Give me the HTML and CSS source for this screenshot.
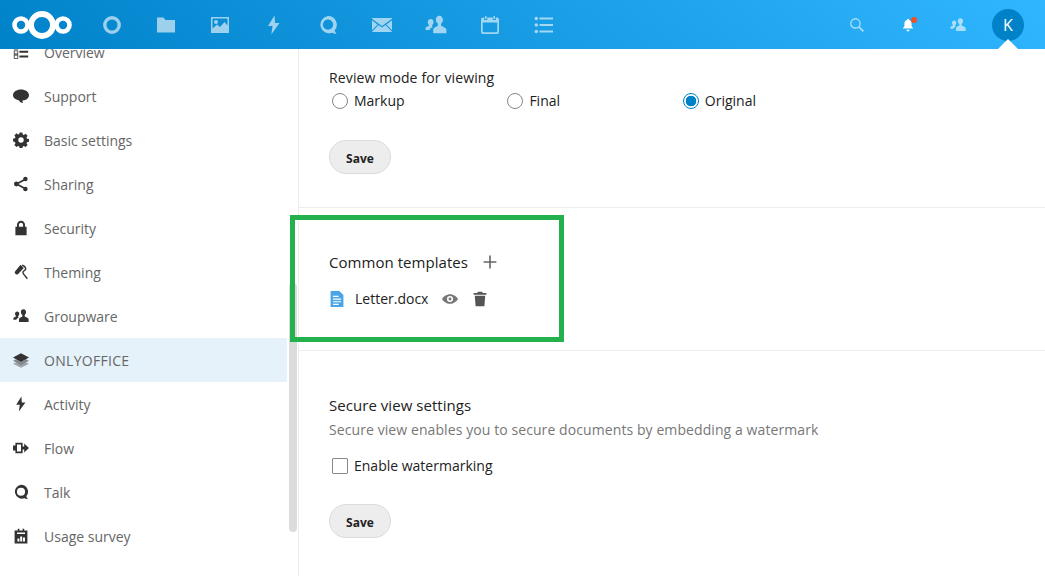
FILE: index.html
```html
<!DOCTYPE html>
<html lang="en">
<head>
<meta charset="utf-8">
<title>ONLYOFFICE settings</title>
<link rel="stylesheet" href="styles.css">
</head>
<body>
<svg class="defs" aria-hidden="true">
  <symbol id="i-ring" viewBox="0 0 20 20"><circle cx="10" cy="10" r="7.2" fill="none" stroke="currentColor" stroke-width="3.4"/></symbol>
  <symbol id="i-folder" viewBox="0 0 20 20"><path fill="currentColor" d="M1 2.500h6.500l2 2.500H19v12.500H1z"/></symbol>
  <symbol id="i-image" viewBox="0 0 20 20"><path fill="currentColor" fill-rule="evenodd" d="M1 2h18v16H1zM2.500 3.500v10l4.500-4 3 2.500 4.500-5 3 3.500V3.500zM6 5a2 2 0 1 1 0 4 2 2 0 0 1 0-4z"/></symbol>
  <symbol id="i-flash" viewBox="0 0 20 20"><path fill="currentColor" d="M10.500 0.500 4 11h4.500l-1.200 8.500L15.500 8H11z"/></symbol>
  <symbol id="i-talk" viewBox="0 0 20 20"><path fill="currentColor" fill-rule="evenodd" d="M10 1a8.700 8.700 0 0 1 6.600 14.400l1.900 3.800-4.400-1.400A8.700 8.700 0 1 1 10 1zm0 3.600a5.100 5.100 0 1 0 0 10.200 5.100 5.100 0 0 0 0-10.200z"/></symbol>
  <symbol id="i-mail" viewBox="0 0 20 20"><path fill="currentColor" d="M0 3h20v.8L10 11 0 3.800zM0 5.200l5.600 4.200L0 15.200zM20 5.200v10l-5.600-5.800zM6.500 10.100 10 12.600l3.500-2.500L20 16.800v.2H0v-.2z"/></symbol>
  <symbol id="i-group" viewBox="0 0 20 20"><path fill="currentColor" d="M13 1.500c2 0 3.300 1.600 3.300 3.600 0 1.600-.8 3-1.700 3.800v1.500c0 .7 4.400 1.500 4.900 3.600v3.500H7.500V14c.4-2 4.200-2.900 4.200-3.600V8.900C10.700 8 9.800 6.700 9.800 5.100 9.800 3.100 11 1.500 13 1.500zM5.300 4.500c1.500 0 2.500 1.200 2.500 2.700 0 1.200-.6 2.300-1.300 2.900v1.100c0 .3.400.5.800.7-1.600.7-2.900 1.500-3.100 2.700H.5v-1.900c.3-1.300 3.200-1.700 3.200-2.500v-.1C2.900 9.500 2.500 8.400 2.500 7.200c0-1.500 1.300-2.700 2.800-2.700z"/></symbol>
  <symbol id="i-calendar" viewBox="0 0 20 20"><path fill="currentColor" fill-rule="evenodd" d="M5 1h1.500v3H5zM13.500 1H15v3h-1.500zM3 2.500h1.200V5h3V2.500h5.600V5h3V2.500H17a2 2 0 0 1 2 2V17a2 2 0 0 1-2 2H3a2 2 0 0 1-2-2V4.500a2 2 0 0 1 2-2zM2.700 7.500V16.500c0 .5.400.8.800.8h13c.5 0 .8-.3.800-.8V7.500z"/></symbol>
  <symbol id="i-tasks" viewBox="0 0 20 20"><path fill="currentColor" d="M5.500 2.500H19v2H5.500zM5.500 9H19v2H5.500zM5.500 15.500H19v2H5.500z"/><circle fill="currentColor" cx="2.300" cy="3.500" r="1.800"/><circle fill="currentColor" cx="2.300" cy="10" r="1.800"/><circle fill="currentColor" cx="2.300" cy="16.500" r="1.800"/></symbol>
  <symbol id="i-search" viewBox="0 0 20 20"><circle cx="8" cy="8" r="5.800" fill="none" stroke="currentColor" stroke-width="1.700"/><path d="M12.300 12.300 18 18" stroke="currentColor" stroke-width="2.200" fill="none"/></symbol>
  <symbol id="i-bell" viewBox="0 0 20 20"><path fill="currentColor" d="M10 2.500c.8 0 1.300.5 1.300 1.200 2.300.6 3.200 2.500 3.200 5v2.800l1.700 2.300v.7H3.800v-.7l1.700-2.300V8.700c0-2.500.9-4.400 3.200-5 0-.7.500-1.200 1.300-1.200zM8 16h4a2 2 0 0 1-4 0z"/></symbol>
  <symbol id="i-list" viewBox="0 0 20 20"><path fill="currentColor" fill-rule="evenodd" d="M1 1.800h5.500v5H1zM8 3h11v2.500H8zM8 8.500h11V11H8zM1 8h5.500v5H1zM2 9v3h3.500V9zM1 13.500h5.500v5H1zM2 14.500v3h3.500v-3zM8 14.500h11V17H8z"/></symbol>
  <symbol id="i-bubble" viewBox="0 0 20 20"><path fill="currentColor" d="M10 2c5.500 0 10 2.900 10 7 0 3.600-3.500 6.300-8 6.600-.4 0-.1 2.600 1 3.200-2.800 0-5-1.500-5.700-3.500C3 14.500 0 12.200 0 9c0-4.100 4.500-7 10-7z"/></symbol>
  <symbol id="i-gear" viewBox="0 0 20 20"><path fill="currentColor" fill-rule="evenodd" d="M8.300 0.500h3.400l.5 2.500 1.400.6 2.100-1.400 2.600 2.600-1.400 2.100.6 1.400 2.500.5v3.400l-2.500.5-.6 1.400 1.400 2.100-2.600 2.600-2.100-1.400-1.400.6-.5 2.500H8.300l-.5-2.500-1.400-.6-2.100 1.400-2.600-2.600 1.400-2.100-.6-1.400L0 11.700V8.300l2.500-.5.6-1.400-1.400-2.100 2.600-2.600 2.100 1.400 1.400-.6zM10 6.600a3.400 3.400 0 1 0 0 6.800 3.400 3.400 0 0 0 0-6.800z"/></symbol>
  <symbol id="i-share" viewBox="0 0 20 20"><path d="M15.500 4 4.500 10l11 6" fill="none" stroke="currentColor" stroke-width="2.200"/><circle fill="currentColor" cx="15.500" cy="3.800" r="2.800"/><circle fill="currentColor" cx="4.200" cy="10" r="3"/><circle fill="currentColor" cx="15.500" cy="16.200" r="2.800"/></symbol>
  <symbol id="i-lock" viewBox="0 0 20 20"><path fill="currentColor" fill-rule="evenodd" d="M10 1c3 0 5 2.200 5 5v2.500h2V19H3V8.500h2V6c0-2.800 2-5 5-5zm0 2.300C8.400 3.300 7.400 4.500 7.400 6v2.500h5.200V6c0-1.500-1-2.700-2.600-2.700z"/></symbol>
  <symbol id="i-roller" viewBox="0 0 20 20"><path fill="currentColor" d="M9.500 1 13.500 5 6.500 12.500c-1 1-2.500.8-3.500-.2-1-1-1-2.500 0-3.500z"/><path d="M11.500 1.500c2.800 1 4.500 2.800 4.300 4.800-.2 1.600-2.800 2.400-3.300 3.700-.3.800.2 1.800 1 3l4.500 5.500" fill="none" stroke="currentColor" stroke-width="1.800"/></symbol>
  <symbol id="i-layers" viewBox="0 0 20 20"><path fill="currentColor" opacity=".55" d="m10 12.500-6.200-3.300L0 10.900 10 16.500l10-5.600-3.800-1.700z"/><path fill="currentColor" opacity=".4" d="m10 16.300-6.200-3.300L0 14.700l10 5 10-5-3.800-1.700z"/><path fill="currentColor" d="M10 1.500 0 7l10 5.400L20 7z"/></symbol>
  <symbol id="i-flow" viewBox="0 0 20 20"><path fill="currentColor" fill-rule="evenodd" d="M3 3.500h9V8h2V4.500l6 5.500-6 5.500V12h-2v4.500H3V13H0V7h3zm2 2v9h5v-9z"/></symbol>
  <symbol id="i-survey" viewBox="0 0 20 20"><path fill="currentColor" fill-rule="evenodd" d="M2 3h4V1h2v2h4V1h2v2h4v16.500H2zM5 5.500v2h10v-2zM5.500 13v4h2.500v-4zM9 10.500V17h2.500v-6.500zM12.500 12v5H15v-5z"/></symbol>
  <symbol id="i-doc" viewBox="0 0 20 20"><path fill="currentColor" fill-rule="evenodd" d="M2 0h11l5 5v15H2zM5 6v1.500h7V6zM5 9.500V11h10V9.500zM5 12.700v1.500h10v-1.500zM5 15.900v1.500h7v-1.500z"/></symbol>
  <symbol id="i-eye" viewBox="0 0 20 20"><path fill="currentColor" fill-rule="evenodd" d="M10 4c4.500 0 8.500 3 10 6-1.500 3-5.500 6-10 6S1.500 13 0 10c1.500-3 5.500-6 10-6zm0 2.200a3.800 3.800 0 1 0 0 7.600 3.800 3.800 0 0 0 0-7.600zM10 8.200a1.800 1.800 0 1 1 0 3.600 1.800 1.800 0 0 1 0-3.600z"/></symbol>
  <symbol id="i-trash" viewBox="0 0 20 20"><path fill="currentColor" d="M7.500 1h5l1 1.500H18v2.300H2V2.500h4.500zM3.500 6h13l-1 13h-11z"/></symbol>
  <symbol id="i-plus" viewBox="0 0 20 20"><path fill="currentColor" d="M9 2h2v7h7v2h-7v7H9v-7H2V9h7z"/></symbol>
</svg>

<header class="topbar">
  <a class="logo" href="#" aria-label="Nextcloud">
    <svg width="60" height="30" viewBox="0 0 60 30"><g fill="none" stroke="#fff"><circle cx="9" cy="15" r="6.500" stroke-width="4.600"/><circle cx="30" cy="15" r="11" stroke-width="5.800"/><circle cx="51" cy="15" r="6.500" stroke-width="4.600"/></g></svg>
  </a>
  <nav class="apps">
    <a class="app" href="#"><svg class="ic20"><use href="#i-ring"/></svg></a>
    <a class="app" href="#"><svg class="ic20"><use href="#i-folder"/></svg></a>
    <a class="app" href="#"><svg class="ic20"><use href="#i-image"/></svg></a>
    <a class="app" href="#"><svg class="ic20"><use href="#i-flash"/></svg></a>
    <a class="app" href="#"><svg class="ic20"><use href="#i-talk"/></svg></a>
    <a class="app" href="#"><svg class="ic20"><use href="#i-mail"/></svg></a>
    <a class="app" href="#"><svg class="ic20 wide"><use href="#i-group"/></svg></a>
    <a class="app" href="#"><svg class="ic20"><use href="#i-calendar"/></svg></a>
    <a class="app" href="#"><svg class="ic20"><use href="#i-tasks"/></svg></a>
  </nav>
  <div class="tools">
    <a class="tool" href="#"><svg class="ic16"><use href="#i-search"/></svg></a>
    <a class="tool tool-bell" href="#"><svg class="ic16"><use href="#i-bell"/></svg><span class="dot"></span></a>
    <a class="tool tool-user" href="#"><svg class="ic16"><use href="#i-group"/></svg></a>
    <a class="avatar-cell" href="#"><span class="avatar">K</span><span class="caret"></span></a>
  </div>
</header>

<div class="layout">
  <aside class="sidebar">
    <ul class="menu">
      <li class="item"><svg class="ic16"><use href="#i-list"/></svg><span>Overview</span></li>
      <li class="item"><svg class="ic16"><use href="#i-bubble"/></svg><span>Support</span></li>
      <li class="item"><svg class="ic16"><use href="#i-gear"/></svg><span>Basic settings</span></li>
      <li class="item"><svg class="ic16"><use href="#i-share"/></svg><span>Sharing</span></li>
      <li class="item"><svg class="ic16"><use href="#i-lock"/></svg><span>Security</span></li>
      <li class="item"><svg class="ic16"><use href="#i-roller"/></svg><span>Theming</span></li>
      <li class="item"><svg class="ic16"><use href="#i-group"/></svg><span>Groupware</span></li>
      <li class="item active"><svg class="ic16"><use href="#i-layers"/></svg><span>ONLYOFFICE</span></li>
      <li class="item"><svg class="ic16"><use href="#i-flash"/></svg><span>Activity</span></li>
      <li class="item"><svg class="ic16"><use href="#i-flow"/></svg><span>Flow</span></li>
      <li class="item"><svg class="ic16"><use href="#i-talk"/></svg><span>Talk</span></li>
      <li class="item"><svg class="ic16"><use href="#i-survey"/></svg><span>Usage survey</span></li>
    </ul>
    <div class="scrollbar"></div>
  </aside>

  <main class="content">
    <section class="section first">
      <p class="line review">Review mode for viewing</p>
      <div class="radios">
        <label class="choice"><input type="radio" name="mode"><span>Markup</span></label>
        <label class="choice"><input type="radio" name="mode"><span>Final</span></label>
        <label class="choice"><input type="radio" name="mode" checked><span>Original</span></label>
      </div>
      <button class="save" type="button">Save</button>
    </section>

    <section class="section second">
      <div class="title-row">
        <h2 class="line heading">Common templates</h2>
        <svg class="plus"><use href="#i-plus"/></svg>
      </div>
      <div class="file-row">
        <svg class="doc"><use href="#i-doc"/></svg>
        <span class="file-name">Letter.docx</span>
        <svg class="eye"><use href="#i-eye"/></svg>
        <svg class="trash"><use href="#i-trash"/></svg>
      </div>
      <div class="callout"></div>
    </section>

    <section class="section third">
      <h2 class="line heading">Secure view settings</h2>
      <p class="line muted">Secure view enables you to secure documents by embedding a watermark</p>
      <label class="choice check"><input type="checkbox"><span>Enable watermarking</span></label>
      <button class="save save-last" type="button">Save</button>
    </section>
  </main>
</div>
</body>
</html>
```

FILE: styles.css
```css
* { box-sizing: border-box; }
html, body { height: 100%; }
body {
  margin: 0;
  overflow: hidden;
  background: #fff;
  color: #222;
  font: 14px/24px "Open Sans", sans-serif;
}
a { color: inherit; text-decoration: none; }
ul { list-style: none; margin: 0; padding: 0; }
h2, p { margin: 0; font: inherit; }
.defs { display: none; }
.ic20 { width: 20px; height: 20px; display: block; }
.ic16 { width: 16px; height: 16px; display: block; flex: none; }
.wide { width: 22px; height: 22px; }

.topbar {
  height: 49px;
  display: flex;
  align-items: center;
  color: #fff;
  background: linear-gradient(40deg, #0082c9 0%, #30b6ff 100%);
  position: relative;
  z-index: 2;
}
.logo { width: 85px; padding: 10px 0 0 12px; display: block; height: 49px; }
.logo svg { display: block; }
.apps { display: flex; }
.app { width: 54px; height: 49px; display: flex; align-items: center; justify-content: center; opacity: .6; }
.tools { margin-left: auto; display: flex; align-items: center; padding-right: 12px; }
.tool { width: 51px; height: 49px; display: flex; align-items: center; justify-content: center; opacity: .6; position: relative; }
.tool-bell { opacity: 1; left: 1px; }
.tool:first-child { left: 1px; }
.dot { position: absolute; top: 17px; left: 29px; width: 6px; height: 6px; border-radius: 50%; background: #f4511e; }
.avatar-cell { width: 50px; height: 49px; display: flex; align-items: center; justify-content: center; position: relative; }
.avatar { width: 32px; height: 32px; border-radius: 50%; background: #0082c9; color: #fff; font-size: 16px; line-height: 32px; text-align: center; }
.caret { position: absolute; bottom: 0; left: 15px; border: 10px solid transparent; border-top: 0; border-bottom-color: #fff; }

.layout { display: flex; height: 527px; overflow: hidden; }

.sidebar { width: 299px; flex: none; border-right: 1px solid #ededed; position: relative; overflow: hidden; }
.menu { margin-top: -19px; width: 287px; }
.item { height: 44px; display: flex; align-items: center; gap: 15px; padding-left: 13px; color: #666; }
.item span { padding-top: 2px; }
.item svg { color: #333; }
.active { background: #e5f2fa; }
.active span { letter-spacing: .3px; }
.scrollbar { position: absolute; top: 234px; right: 1px; width: 8px; height: 249px; border-radius: 4px; background: #dcdcdc; }

.content { flex: 1; min-width: 0; }
.section { padding-left: 30px; border-bottom: 1px solid #ededed; position: relative; }
.first { padding-top: 16px; padding-bottom: 33px; }
.second { padding-top: 42px; padding-bottom: 39px; }
.third { padding-top: 42px; border-bottom: 0; }

.line { height: 24px; padding-top: 1px; }
.review { letter-spacing: .13px; }
.line.heading { font-size: 15px; letter-spacing: .05px; padding-top: 0; }
.muted { color: #777; letter-spacing: .086px; }

.radios { display: flex; padding-left: 3px; }
.choice { display: flex; align-items: center; gap: 6px; width: 175.4px; }
.choice input { appearance: none; margin: 0; width: 16px; height: 16px; background: #fff; border: 1px solid #878787; flex: none; }
.choice input[type=radio] { border-radius: 50%; }
.choice input[type=checkbox] { border-radius: 1px; }
.choice input:checked { border-color: #0082c9; background: radial-gradient(circle, #0082c9 0 5px, #fff 5.6px); }
.check { margin: 13px 0 0 3px; width: auto; }

.save {
  display: block;
  width: 62px;
  height: 34px;
  margin-top: 27px;
  padding: 2px 0 0;
  border: 1px solid #dbdbdb;
  border-radius: 17px;
  background: #ededed;
  color: #222;
  font: 700 12px "Open Sans", sans-serif;
}
.save-last { margin-top: 26px; }

.title-row { display: flex; align-items: center; gap: 14px; }
.plus { width: 16px; height: 16px; color: #666; }
.file-row { margin-top: 13px; display: flex; align-items: center; height: 24px; }
.doc { width: 16px; height: 16px; color: #4aa5e8; margin-right: 10px; }
.file-name { margin-right: 14px; }
.eye { width: 16px; height: 16px; color: #777; margin-right: 14px; }
.trash { width: 16px; height: 16px; color: #555; }
.callout { position: absolute; left: -9px; top: 7px; width: 274px; height: 127px; border: 5px solid #22b14c; pointer-events: none; }
```
